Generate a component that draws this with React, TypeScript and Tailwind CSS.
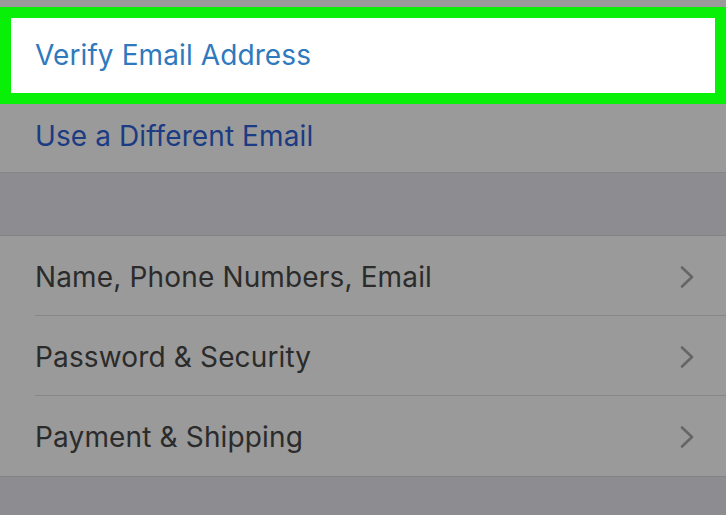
const rows = ['Name, Phone Numbers, Email', 'Password & Security', 'Payment & Shipping']

function Chevron() {
  return (
    <svg width="16" height="24" viewBox="0 0 16 24" fill="none" className="shrink-0">
      <path d="M3 2.5 L13 12 L3 21.5" stroke="#666666" strokeWidth="2.6" strokeLinecap="round" strokeLinejoin="round" />
    </svg>
  )
}

function App() {
  return (
    <main
      className="w-[726px] h-[515px] overflow-hidden bg-[#9a9a9a] pt-[7px]"
      style={{ fontFamily: 'Inter, "Noto Sans", sans-serif' }}
    >
      <div className="h-[97px] border-[11px] border-[#08ef08] bg-white flex items-center pl-[24px] pb-[2px]">
        <span className="text-[28px] text-[#2f79bd] tracking-[0.1px]">Verify Email Address</span>
      </div>

      <div className="h-[69px] flex items-center pl-[35px] pb-[4px] border-b border-[#858587]">
        <span className="text-[28px] text-[#1b3b83] tracking-[0.1px]">Use a Different Email</span>
      </div>

      <div className="h-[63px] bg-[#8d8d91] border-b border-[#828285]" />

      <section className="pl-[35px]">
        {rows.map((label, i) => (
          <div
            key={label}
            className={
              'h-[80px] flex items-center justify-between pr-[31px] pt-[2px] ' +
              (i < rows.length - 1 ? 'border-b border-[#878787]' : '')
            }
          >
            <span className="text-[28px] text-[#2b2b2b] tracking-[0.15px]">{label}</span>
            <Chevron />
          </div>
        ))}
      </section>

      <div className="h-[40px] bg-[#8d8d91] border-t border-[#828285]" />
    </main>
  )
}

export default App
